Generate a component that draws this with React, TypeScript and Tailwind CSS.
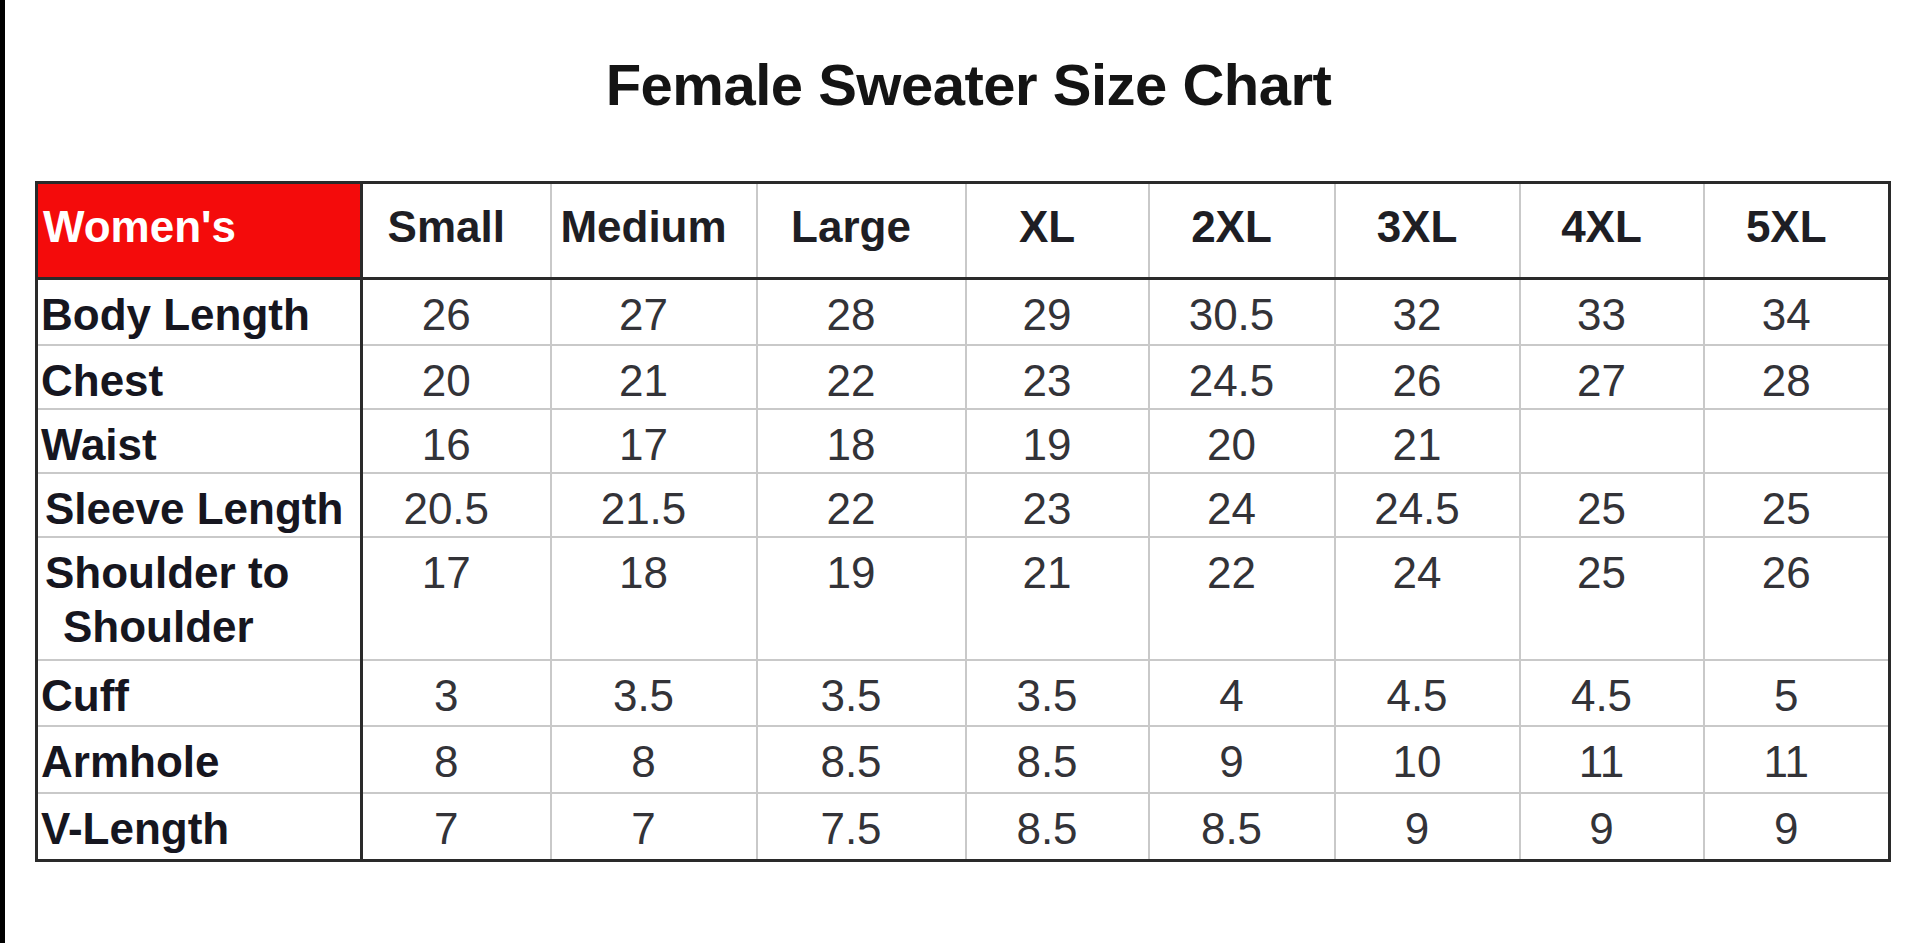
const sizes = ["Small", "Medium", "Large", "XL", "2XL", "3XL", "4XL", "5XL"];

const colWidths = ["w-[325px]", "w-[189px]", "w-[206px]", "w-[209px]", "w-[183px]", "w-[186px]", "w-[185px]", "w-[184px]", "w-[186px]"];

type Row = { label: React.ReactNode; values: string[]; h: string };

const rows: Row[] = [
  { label: "Body Length", values: ["26", "27", "28", "29", "30.5", "32", "33", "34"], h: "h-[66px]" },
  { label: "Chest", values: ["20", "21", "22", "23", "24.5", "26", "27", "28"], h: "h-[64px]" },
  { label: "Waist", values: ["16", "17", "18", "19", "20", "21", "", ""], h: "h-[64px]" },
  { label: <span className="pl-[4px]">Sleeve Length</span>, values: ["20.5", "21.5", "22", "23", "24", "24.5", "25", "25"], h: "h-[64px]" },
  {
    label: (
      <span className="block pl-[4px]">
        Shoulder to
        <br />
        <span className="pl-[18px]">Shoulder</span>
      </span>
    ),
    values: ["17", "18", "19", "21", "22", "24", "25", "26"],
    h: "h-[123px]",
  },
  { label: "Cuff", values: ["3", "3.5", "3.5", "3.5", "4", "4.5", "4.5", "5"], h: "h-[66px]" },
  { label: "Armhole", values: ["8", "8", "8.5", "8.5", "9", "10", "11", "11"], h: "h-[67px]" },
  { label: "V-Length", values: ["7", "7", "7.5", "8.5", "8.5", "9", "9", "9"], h: "h-[68px]" },
];

export default function App() {
  return (
    <div className="min-h-screen bg-white border-l-[5px] border-black font-['Liberation_Sans',Arial,sans-serif]">
      <div className="pt-[56px] flex justify-center pl-[12px]">
        <h1 className="text-[58px] leading-[58px] font-bold text-[#141414] tracking-[-0.5px]">
          Female Sweater Size Chart
        </h1>
      </div>

      <div className="mt-[67px] ml-[30px]">
        <table className="table-fixed border-collapse border-[3px] border-[#2a2a2a] w-[1853px]">
          <colgroup>
            {colWidths.map((w, i) => (
              <col key={i} className={w} />
            ))}
          </colgroup>
          <thead>
            <tr className="h-[96px]">
              <th className="bg-[#f40b0b] text-white text-left align-top pt-[16px] pl-[5px] text-[44px] leading-[54px] font-bold border-[3px] border-[#2a2a2a] border-r-[3px]">
                Women's
              </th>
              {sizes.map((s) => (
                <th
                  key={s}
                  className="align-top pt-[16px] pr-[20px] text-center text-[44px] leading-[54px] font-bold text-[#1e1e24] border-x-2 border-x-[#c9c9c9] border-b-[3px] border-b-[#2a2a2a]"
                >
                  {s}
                </th>
              ))}
            </tr>
          </thead>
          <tbody>
            {rows.map((r, ri) => (
              <tr key={ri} className={r.h}>
                <td className="align-top pt-[8px] pl-[3px] text-[44px] leading-[54px] font-bold text-[#16161f] whitespace-nowrap border-r-[3px] border-r-[#2a2a2a] border-b-2 border-b-[#c9c9c9]">
                  {r.label}
                </td>
                {r.values.map((v, vi) => (
                  <td
                    key={vi}
                    className="align-top pt-[8px] pr-[20px] text-center text-[44px] leading-[54px] text-[#333338] border-2 border-[#c9c9c9]"
                  >
                    {v}
                  </td>
                ))}
              </tr>
            ))}
          </tbody>
        </table>
      </div>
    </div>
  );
}
